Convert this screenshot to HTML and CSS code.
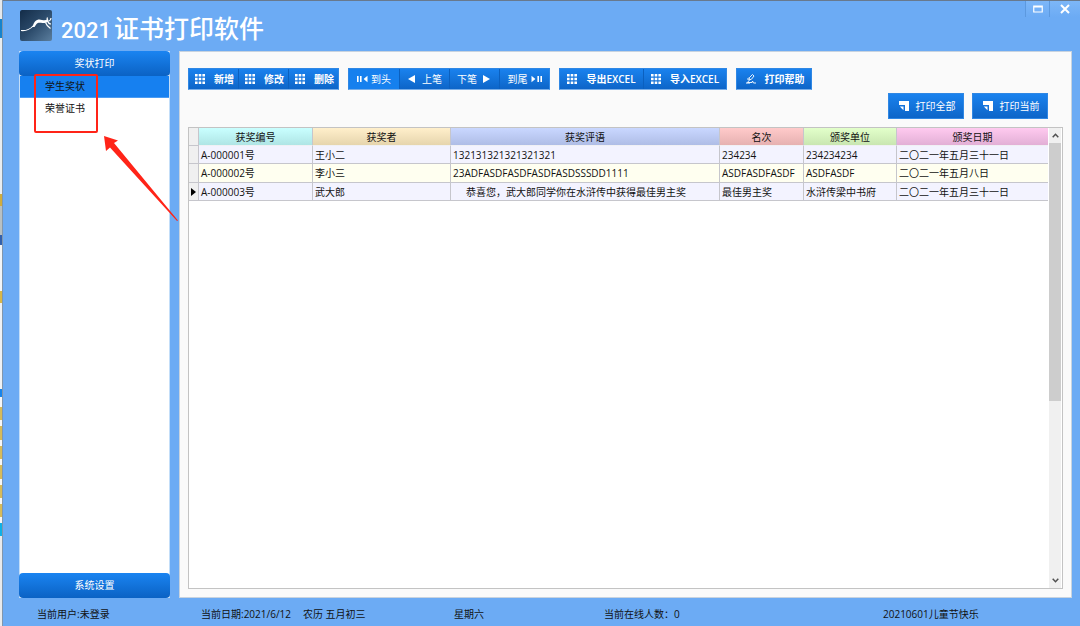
FILE: index.html
```html
<!DOCTYPE html>
<html lang="zh-CN">
<head>
<meta charset="utf-8">
<title>2021证书打印软件</title>
<link rel="stylesheet" href="styles.css">
</head>
<body>
<svg class="defs" aria-hidden="true">
  <symbol id="grid" viewBox="0 0 10 10"><path d="M0 0h2.6v2.6H0zM3.7 0h2.6v2.6H3.7zM7.4 0H10v2.6H7.4zM0 3.7h2.6v2.6H0zM3.7 3.7h2.6v2.6H3.7zM7.4 3.7H10v2.6H7.4zM0 7.4h2.6V10H0zM3.7 7.4h2.6V10H3.7zM7.4 7.4H10V10H7.4z" fill="#fff"/></symbol>
  <symbol id="note" viewBox="0 0 10 10"><path d="M0 0h10v10H6V4H0z" fill="#fff"/><path d="M.8 5.500H4.500v3.700z" fill="#fff"/></symbol>
  <symbol id="first" viewBox="0 0 11 8"><path d="M0 1h1.6v6H0zM3 1h1.6v6H3zM10.500 .8v6.400L6.600 4z" fill="#fff"/></symbol>
  <symbol id="last" viewBox="0 0 11 8"><path d="M.5 .8v6.400L4.400 4zM6.400 1H8v6H6.400zM9.400 1H11v6H9.400z" fill="#fff"/></symbol>
</svg>
<div class="desktop" aria-hidden="true"></div>
<div class="window">
  <header class="titlebar">
    <svg class="logo" viewBox="0 0 32 31" aria-hidden="true">
      <defs><linearGradient id="sky" x1="0" y1="0" x2="1" y2="1"><stop offset="0" stop-color="#132c48"/><stop offset=".5" stop-color="#2c4b6b"/><stop offset="1" stop-color="#5b7e9e"/></linearGradient></defs>
      <rect width="32" height="31" rx="2" fill="url(#sky)"/>
      <path d="M1 20.500c5 .5 9-1 12-4.500" fill="none" stroke="#fff" stroke-width="1.100"/>
      <path d="M12 17c1.500-2 1.500-4 3-5.500 2.500-2.500 5-2 7-1.500 2 .4 4 .4 5.500-.5L29 11c-2 2-5 2.500-8 1.800-2-.4-3.500 0-4.500 1.200L14.500 17z" fill="#fff"/>
      <path d="M28 10.500c-1.500-1-1-2-.5-3M29 11c2-.5 2-2 2-3M28 11.500c.5 2 1 2.500 3 2.500M25.500 12.500c1 3 3 4.500 5 6" fill="none" stroke="#fff" stroke-width="1.200"/>
    </svg>
    <h1 class="title"><span class="year">2021</span>证书打印软件</h1>
    <div class="controls">
      <button class="control" aria-label="最大化"><svg width="10" height="8" viewBox="0 0 10 8"><path d="M.75 1h8.500v6H.75zM.75 2h8.500" fill="none" stroke="#fff" stroke-width="1.200"/></svg></button>
      <button class="control" aria-label="关闭"><svg width="10" height="10" viewBox="0 0 10 10"><path d="M1 1l8 8M9 1L1 9" stroke="#fff" stroke-width="2"/></svg></button>
    </div>
  </header>
  <div class="body">
    <nav class="sidebar">
      <button class="section">奖状打印</button>
      <ul class="menu">
        <li><a class="item selected" href="#student">学生奖状</a></li>
        <li><a class="item" href="#honor">荣誉证书</a></li>
      </ul>
      <button class="section">系统设置</button>
    </nav>
    <main class="panel">
      <div class="toolbar">
        <div class="group">
          <button class="tool edit"><svg class="icon"><use href="#grid"/></svg>新增</button>
          <button class="tool edit"><svg class="icon"><use href="#grid"/></svg>修改</button>
          <button class="tool edit"><svg class="icon"><use href="#grid"/></svg>删除</button>
        </div>
        <div class="group">
          <button class="tool step focused"><svg width="11" height="8"><use href="#first"/></svg>到头</button>
          <button class="tool step"><svg width="12" height="8" viewBox="0 0 12 8"><path d="M8 0v8L1 4z" fill="#fff"/></svg>上笔</button>
          <button class="tool step">下笔<svg width="12" height="8" viewBox="0 0 12 8"><path d="M3 0v8l7-4z" fill="#fff"/></svg></button>
          <button class="tool step">到尾<svg width="11" height="8"><use href="#last"/></svg></button>
        </div>
        <div class="group">
          <button class="tool wide"><svg class="icon"><use href="#grid"/></svg>导出EXCEL</button>
          <button class="tool wide"><svg class="icon"><use href="#grid"/></svg>导入EXCEL</button>
        </div>
        <div class="group">
          <button class="tool help"><svg class="icon" viewBox="0 0 10 10"><path d="M6.500 .5L3.500 3.500 3 6l2.500-.8L8 2zM3 3.500L1.500 5 3 6.500 1.500 8.500h4.500l.5-1.500 1 2H10" fill="none" stroke="#fff" stroke-width=".9"/><path d="M0 9h4" stroke="#fff"/></svg>打印帮助</button>
        </div>
      </div>
      <div class="prints">
        <button class="print"><svg class="icon"><use href="#note"/></svg>打印全部</button>
        <button class="print"><svg class="icon"><use href="#note"/></svg>打印当前</button>
      </div>
      <div class="list">
        <div class="sheet">
          <table class="records">
            <colgroup><col class="c-mark"><col class="c-id"><col class="c-name"><col class="c-text"><col class="c-rank"><col class="c-unit"><col></colgroup>
            <thead><tr><td class="mark"></td><th class="cyan">获奖编号</th><th class="tan">获奖者</th><th class="blue">获奖评语</th><th class="red">名次</th><th class="green">颁奖单位</th><th class="pink">颁奖日期</th></tr></thead>
            <tbody>
              <tr><td class="mark"></td><td>A-000001号</td><td>王小二</td><td>132131321321321321</td><td>234234</td><td>234234234</td><td>二〇二一年五月三十一日</td></tr>
              <tr><td class="mark"></td><td>A-000002号</td><td>李小三</td><td>23ADFASDFASDFASDFASDSSSDD1111</td><td>ASDFASDFASDF</td><td>ASDFASDF</td><td>二〇二一年五月八日</td></tr>
              <tr><td class="mark"><svg class="pointer" width="6" height="8" viewBox="0 0 6 8"><path d="M0 0v8l5-4z"/></svg></td><td>A-000003号</td><td>武大郎</td><td class="indent">恭喜您，武大郎同学你在水浒传中获得最佳男主奖</td><td>最佳男主奖</td><td>水浒传梁中书府</td><td>二〇二一年五月三十一日</td></tr>
            </tbody>
          </table>
        </div>
        <div class="scrollbar">
          <button class="arrow" aria-label="向上滚动"><svg width="7" height="5" viewBox="0 0 7 5"><path d="M.7 4.200L3.500 1.300l2.800 2.900" fill="none" stroke="#505050" stroke-width="1.500"/></svg></button>
          <div class="track"><div class="thumb"></div></div>
          <button class="arrow" aria-label="向下滚动"><svg width="7" height="5" viewBox="0 0 7 5"><path d="M.7 .8l2.800 2.900L6.300 .8" fill="none" stroke="#505050" stroke-width="1.500"/></svg></button>
        </div>
      </div>
    </main>
  </div>
  <footer class="status">
    <span>当前用户:未登录</span>
    <span>当前日期:2021/6/12</span>
    <span>农历 五月初三</span>
    <span>星期六</span>
    <span>当前在线人数：0</span>
    <span>20210601儿童节快乐</span>
  </footer>
</div>
<svg class="callout" width="180" height="222" viewBox="0 0 180 222" aria-hidden="true">
  <rect x="35" y="75" width="62" height="57" rx="1" fill="none" stroke="#ff2418" stroke-width="2"/>
  <path d="M104 136l14 4.500-4 2.500L178 220.500l-1 .5L110 147.500l-4 3.500z" fill="#ff2418"/>
</svg>
</body>
</html>
```
FILE: styles.css
```css
* {
  box-sizing: border-box;
}

body {
  margin: 0;
  height: 100vh;
  display: flex;
  position: relative;
  overflow: hidden;
  font: 10px/14px "Open Sans", "Noto Sans CJK SC", sans-serif;
  color: #111;
}

button {
  margin: 0;
  padding: 0;
  border: 0;
  font: inherit;
  color: #fff;
  background: none;
}

svg {
  display: block;
  flex: none;
}

.defs {
  position: absolute;
  width: 0;
  height: 0;
}

.desktop {
  width: 3px;
  flex: none;
  border-right: 1px solid #8296ab;
  background: linear-gradient(#e4e8ec 0 19px, #1583cd 19px 38px, #e9edf0 38px 194px, #d0ad3d 194px 206px, #b8c0c2 206px 235px, #3361ac 235px 245px, #f2f5f7 245px 291px, #d9b748 291px 303px, #eef1f4 303px 389px, #1684ec 389px 397px, #f6f7f8 397px 407px, #d6bb5a 407px 420px, #f6f7f8 420px 426px, #d6bb5a 426px 440px, #f6f7f8 440px 446px, #d6bb5a 446px 459px, #f6f7f8 459px 465px, #d6bb5a 465px 479px, #f6f7f8 479px 485px, #d6bb5a 485px 498px, #f6f7f8 498px 504px, #d6bb5a 504px 517px, #f6f7f8 517px 523px, #0eb1e6 523px 536px, #e8eaec 536px);
}

.window {
  flex: 1;
  min-width: 0;
  display: flex;
  flex-direction: column;
  background: #6cabf4;
  border-top: 1px solid #68798d;
}

.titlebar {
  height: 50px;
  flex: none;
  display: flex;
  align-items: flex-start;
  padding-left: 17px;
}

.logo {
  width: 32px;
  height: 31px;
  margin-top: 9px;
}

.title {
  margin: 9px 0 0 9px;
  font: 500 25px/34px "Noto Sans CJK SC", sans-serif;
  color: #fff;
}

.year {
  margin-right: 3px;
  font: 500 22px/34px Roboto, sans-serif;
}

.controls {
  margin-left: auto;
  display: flex;
}

.control {
  width: 24px;
  height: 16px;
  display: grid;
  place-items: center;
  border-left: 1px solid #5c99df;
  background: linear-gradient(#7db7f8, #6cabf4);
}

.control:last-child {
  width: 31px;
}

.body {
  flex: 1;
  min-height: 0;
  display: flex;
  gap: 9px;
  padding: 0 8px 0 16px;
}

.sidebar {
  width: 151px;
  flex: none;
  display: flex;
  flex-direction: column;
  border: solid #c3def9;
  border-width: 0 1px;
  background: #fff;
}

.section {
  height: 25px;
  flex: none;
  margin: 0 -1px;
  padding-bottom: 1px;
  border-radius: 4px;
  background: linear-gradient(#1a84f1, #0b62c4);
}

.menu {
  flex: 1;
  margin: 0;
  padding: 0;
  list-style: none;
}

.item {
  display: block;
  padding: 0 25px;
  line-height: 21px;
  color: #111;
  text-decoration: none;
}

.selected {
  border-bottom: 1px solid #4a9bf3;
  background: #1680f0;
}

.panel {
  flex: 1;
  min-width: 0;
  display: flex;
  flex-direction: column;
  padding: 16px 8px 8px;
  border: 1px solid #c8d3df;
  background: #fafafa;
}

.toolbar {
  display: flex;
  gap: 9px;
}

.group {
  display: flex;
  border: 1px solid #2f87e4;
  border-bottom-color: #78aee9;
  background: linear-gradient(#1a82ee, #0d65c8);
}

.tool {
  height: 20px;
  display: flex;
  align-items: center;
  justify-content: center;
  white-space: nowrap;
}

.tool + .tool {
  border-left: 1px solid #0b60bf;
}

.edit {
  gap: 9px;
  padding: 0 4px 0 6px;
  font-weight: 600;
}

.step {
  width: 50px;
  gap: 3px;
}

.focused {
  background: #1680ee;
}

.wide,
.help {
  width: 83px;
  gap: 9px;
  font-weight: 600;
}

.help {
  width: 74px;
  padding-left: 2px;
}

.icon {
  width: 10px;
  height: 10px;
}

.prints {
  display: flex;
  justify-content: flex-end;
  gap: 8px;
  padding: 3px 15px 8px 0;
}

.print {
  width: 76px;
  height: 26px;
  display: flex;
  align-items: center;
  justify-content: center;
  gap: 7px;
  padding-left: 2px;
  border: 1px solid #2f87e4;
  background: linear-gradient(#1a82ee, #0d65c8);
}

.list {
  flex: 1;
  min-height: 0;
  display: flex;
  border: 1px solid #c3c3c3;
  background: #fff;
}

.sheet {
  flex: 1;
  min-width: 0;
  overflow: hidden;
}

.records {
  width: 100%;
  table-layout: fixed;
  border-collapse: separate;
  border-spacing: 0;
}

.c-mark { width: 10px; }
.c-id { width: 114px; }
.c-name { width: 138px; }
.c-text { width: 269px; }
.c-rank { width: 84px; }
.c-unit { width: 93px; }

.records th,
.records td {
  height: 18px;
  padding: 0 2px;
  border: solid #c6c6cc;
  border-width: 0 1px 1px 0;
  font-weight: 400;
  white-space: nowrap;
}

.records th {
  border-bottom-color: #f0f0f4;
}

.records tr > :last-child {
  border-right: 0;
}

tbody tr {
  background: #f3f3ff;
}

tbody tr:nth-child(even) {
  background: #fffff0;
}

tbody tr:nth-child(even) td {
  height: 19px;
}

.records .mark {
  background: #f0f0f0;
}

.records .indent {
  padding-left: 15px;
}

.cyan { background: linear-gradient(#c9ffff, #afe5e5); }
.tan { background: linear-gradient(#ffefcb, #e6d5ad); }
.blue { background: linear-gradient(#c9d7ff, #afbde6); }
.red { background: linear-gradient(#ffcaca, #e6b1b1); }
.green { background: linear-gradient(#e2ffca, #c9e6b1); }
.pink { background: linear-gradient(#ffcaef, #e2afd6); }

.scrollbar {
  width: 14px;
  display: flex;
  flex-direction: column;
  border: solid #fff;
  border-width: 0 1px;
  background: #f0f0f0;
}

.arrow {
  height: 15px;
  display: grid;
  place-items: center;
}

.track {
  flex: 1;
}

.thumb {
  height: 60%;
  background: #cdcdcd;
}

.status {
  height: 28px;
  flex: none;
  display: grid;
  grid-template-columns: 164fr 102fr 151fr 150fr 279fr 197fr;
  align-items: center;
  padding: 4px 0 0 34px;
  white-space: nowrap;
}

.callout {
  position: absolute;
  left: 0;
  top: 0;
  pointer-events: none;
}
```
